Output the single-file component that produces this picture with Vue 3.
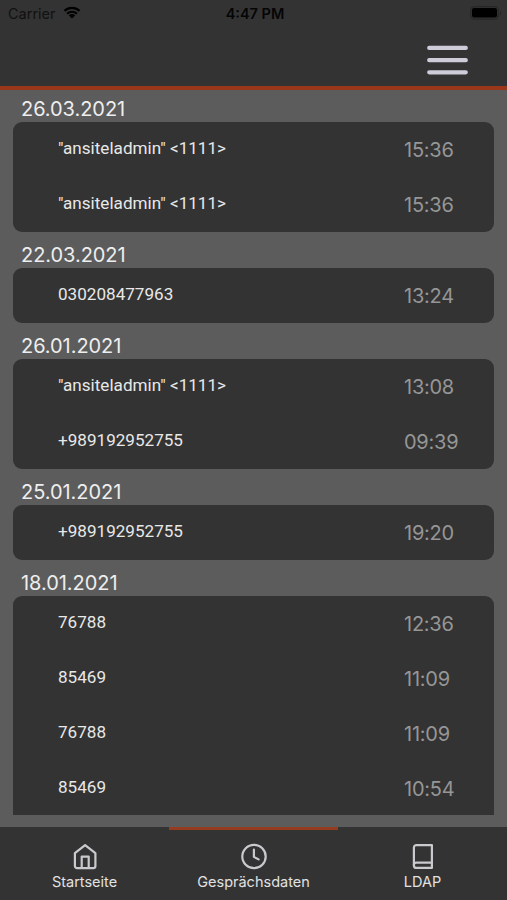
<script setup>
import { ref } from 'vue'

const groups = [
  {
    date: '26.03.2021',
    calls: [
      { name: '"ansiteladmin" <1111>', time: '15:36' },
      { name: '"ansiteladmin" <1111>', time: '15:36' },
    ],
  },
  { date: '22.03.2021', calls: [{ name: '030208477963', time: '13:24' }] },
  {
    date: '26.01.2021',
    calls: [
      { name: '"ansiteladmin" <1111>', time: '13:08' },
      { name: '+989192952755', time: '09:39' },
    ],
  },
  { date: '25.01.2021', calls: [{ name: '+989192952755', time: '19:20' }] },
  {
    date: '18.01.2021',
    calls: [
      { name: '76788', time: '12:36' },
      { name: '85469', time: '11:09' },
      { name: '76788', time: '11:09' },
      { name: '85469', time: '10:54' },
    ],
  },
]

const tabs = [
  { id: 'home', label: 'Startseite' },
  { id: 'calls', label: 'Gesprächsdaten' },
  { id: 'ldap', label: 'LDAP' },
]
const active = ref('calls')
</script>

<template>
  <div class="screen">
    <header class="header">
      <div class="status">
        <div class="carrier">
          <span>Carrier</span>
          <svg class="wifi" width="18" height="13" viewBox="0 0 18 13">
            <path d="M1.4 4.9a11 11 0 0 1 15.2 0M4.1 7.7a7.1 7.1 0 0 1 9.8 0" fill="none" stroke="#000" stroke-width="2.2" />
            <path d="M9 12.6 5.8 9.4a4.6 4.6 0 0 1 6.4 0z" fill="#000" />
          </svg>
        </div>
        <span class="clock">4:47 PM</span>
        <svg class="battery" width="32" height="15" viewBox="0 0 32 15">
          <rect x="0.6" y="0.6" width="27.8" height="12.6" rx="4" fill="none" stroke="#272727" stroke-width="1.2" />
          <rect x="2" y="2" width="25" height="9.600" rx="2" fill="#000" />
          <path d="M30 5v4.400c1.600-.6 1.600-3.800 0-4.400z" fill="#272727" />
        </svg>
      </div>
      <button class="menu" aria-label="Menü">
        <svg width="41" height="30" viewBox="0 0 41 30" stroke="#cfccda" stroke-width="4.200" stroke-linecap="round">
          <path d="M2.200 2.900h36.600M2.200 15.200h36.600M2.200 27.300h36.600" />
        </svg>
      </button>
    </header>

    <main class="list">
      <section v-for="g in groups" :key="g.date" class="group">
        <h2>{{ g.date }}</h2>
        <ul>
          <li v-for="(c, i) in g.calls" :key="i">
            <span class="name">{{ c.name }}</span>
            <span class="time">{{ c.time }}</span>
          </li>
        </ul>
      </section>
    </main>

    <nav class="tabs">
      <button
        v-for="t in tabs"
        :key="t.id"
        :class="['tab', { active: active === t.id }]"
        @click="active = t.id"
      >
        <svg width="28" height="28" viewBox="0 0 28 28" fill="none" stroke="#c9c9ce" stroke-width="2.200" stroke-linejoin="round" stroke-linecap="round">
          <template v-if="t.id === 'home'">
            <path d="M3.900 11.200 14.100 3.200l10.300 8v12.900a2.100 2.100 0 0 1-2.100 2.100H6a2.100 2.100 0 0 1-2.100-2.100z" />
            <path d="M10.700 26V14.600h7V26" />
          </template>
          <template v-else-if="t.id === 'calls'">
            <circle cx="14" cy="14.500" r="11.700" />
            <path d="M13.900 7.700v7.200l4.700 2.500" />
          </template>
          <template v-else>
            <path d="M22.900 3.100H7.400a2.500 2.500 0 0 0-2.500 2.500v17.800a2.500 2.500 0 0 0 2.500 2.500h15.500z" />
            <path d="M4.900 23.100a2.500 2.500 0 0 1 2.500-2.500h15.500" />
          </template>
        </svg>
        <span>{{ t.label }}</span>
      </button>
    </nav>
  </div>
</template>

<style>
body { margin: 0; background: #5c5c5c; }
</style>

<style scoped>
.screen {
  width: 507px;
  height: 900px;
  display: flex;
  flex-direction: column;
  overflow: hidden;
  background: #5c5c5c;
  font-family: Inter, "Liberation Sans", sans-serif;
}
button { border: 0; padding: 0; background: none; font: inherit; }

.header {
  flex: none;
  box-sizing: border-box;
  height: 90px;
  background: #333;
  border-bottom: 4px solid #9a371a;
}
.status {
  display: grid;
  grid-template-columns: 1fr auto 1fr;
  align-items: center;
  height: 27px;
  padding: 0 7px 0 8px;
  font-size: 14.5px;
  color: #050505;
}
.carrier { display: flex; align-items: center; gap: 7px; color: #111; }
.wifi { margin-top: -2px; }
.clock { font-weight: 600; padding-left: 2px; }
.battery { justify-self: end; margin-right: -2px; }
.menu { display: block; margin: 18px 39px 0 auto; }
.menu svg { display: block; }

/* the last card runs on below the fold */
.list { flex: none; box-sizing: border-box; height: 725px; overflow: hidden; margin-bottom: 12px; padding: 0 13px; }
.group { padding-bottom: 4px; }
.group:last-child ul { border-radius: 9px 9px 0 0; }
h2 {
  box-sizing: border-box;
  height: 32.2px;
  margin: 0;
  padding-left: 8px;
  font-size: 20px;
  line-height: 38px;
  font-weight: 400;
  letter-spacing: -0.05px;
  color: #eee;
}
ul {
  margin: 0;
  padding: 0;
  list-style: none;
  background: #333;
  border-radius: 9px;
}
li {
  display: grid;
  grid-template-columns: 1fr 90px;
  height: 54.85px;
  padding-left: 45px;
}
.name { font: 17.1px/52px Roboto, sans-serif; color: #e8e8e8; }
.time { font-size: 20px; line-height: 56px; letter-spacing: -0.25px; color: #969696; }

.tabs {
  flex: none;
  display: grid;
  grid-template-columns: repeat(3, 1fr);
  height: 73px;
  background: #333;
}
.tab {
  display: flex;
  flex-direction: column;
  align-items: center;
  padding-top: 12px;
  border-top: 3px solid transparent;
  font-size: 14.5px;
  line-height: 18px;
  color: #e2e2e2;
}
.tab.active { border-top-color: #943b20; }
.tab span { margin-top: 3px; }
</style>
